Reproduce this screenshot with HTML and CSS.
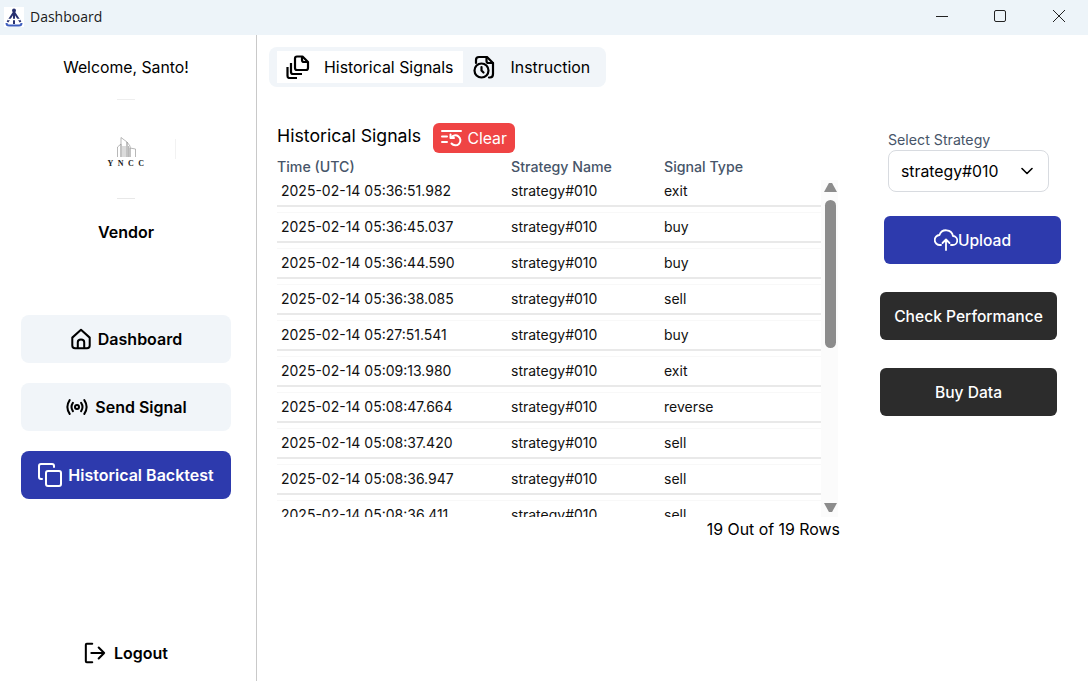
FILE: index.html
```html
<!DOCTYPE html>
<html lang="en">
<head>
	<meta charset="utf-8">
	<title>Dashboard</title>
	<link rel="stylesheet" href="styles.css">
</head>
<body>
	<header class="titlebar">
		<svg class="app-icon" width="20" height="20" viewBox="0 0 20 20">
			<rect width="20" height="20" fill="#fff"/>
			<circle cx="10" cy="3.5" r="2" fill="#27306f"/>
			<path d="M10 5 L3.5 15 M10 5 L16.5 15 M10 5 V17" stroke="#27306f" stroke-width="2" fill="none"/>
			<path d="M4 12.5 H16" stroke="#fff" stroke-width="1.5"/>
			<path d="M2.5 16 Q2.5 18.500 5 18.500 H15 Q17.500 18.500 17.500 16" stroke="#3f5fc0" stroke-width="2" fill="none"/>
		</svg>
		<span class="app-title">Dashboard</span>
		<div class="win-controls">
			<svg width="12" height="12" viewBox="0 0 12 12"><path d="M0 6.500 H12" stroke="#222" stroke-width="1"/></svg>
			<svg width="12" height="12" viewBox="0 0 12 12"><rect x=".5" y=".5" width="11" height="11" rx="1.500" fill="none" stroke="#222"/></svg>
			<svg width="14" height="14" viewBox="0 0 14 14"><path d="M1 1 L13 13 M13 1 L1 13" stroke="#222" stroke-width="1"/></svg>
		</div>
	</header>

	<div class="app">
		<aside class="sidebar">
			<p class="welcome">Welcome, Santo!</p>
			<div class="logo">
				<svg width="19" height="20" viewBox="0 0 19 20" fill="none" stroke="#999" stroke-width=".7">
					<path d="M.5 20 V10 L4 7 V20 M4 20 V.5 L10 5 V20 M6 20 V9 M8 20 V9 M10 20 V5 L13 9 V20 M13 20 V11 L18.500 12 V20 M11.500 20 V9"/>
				</svg>
				<span class="logo-text">YNCC</span>
			</div>
			<p class="role">Vendor</p>

			<nav class="side-nav">
				<a class="nav-btn">
					<svg width="22" height="22" viewBox="0 0 24 24" fill="none" stroke="currentColor" stroke-width="2.200" stroke-linejoin="round"><path d="M2.500 10.500 L12 2 L21.500 10.500 V19 Q21.500 22 18.500 22 H5.500 Q2.500 22 2.500 19 Z"/><path d="M8.500 22 V15.500 Q8.500 12.500 12 12.500 Q15.500 12.500 15.500 15.500 V22"/></svg>
					Dashboard
				</a>
				<a class="nav-btn">
					<svg width="24" height="22" viewBox="0 0 24 24" fill="none" stroke="currentColor" stroke-width="2.200" stroke-linecap="round"><circle cx="12" cy="12" r="2.200"/><path d="M7.500 7.500 Q4.500 12 7.500 16.500 M16.500 7.500 Q19.500 12 16.500 16.500 M4 4.500 Q-1 12 4 19.500 M20 4.500 Q25 12 20 19.500"/></svg>
					Send Signal
				</a>
				<a class="nav-btn active">
					<svg width="24" height="24" viewBox="0 0 24 24" fill="none" stroke="currentColor" stroke-width="2" stroke-linecap="round" stroke-linejoin="round"><rect x="8" y="8" width="15" height="15" rx="2"/><path d="M4 16 H3 Q1 16 1 14 V3 Q1 1 3 1 H14 Q16 1 16 3 V4"/></svg>
					Historical Backtest
				</a>
			</nav>

			<a class="logout">
				<svg width="22" height="22" viewBox="0 0 24 24" fill="none" stroke="currentColor" stroke-width="2.200" stroke-linecap="round" stroke-linejoin="round"><path d="M9 2 H3 Q2 2 2 3 V21 Q2 22 3 22 H9"/><path d="M8 12 H22 M16 6 L22 12 L16 18"/></svg>
				Logout
			</a>
		</aside>

		<main class="content">
			<div class="tabs">
				<a class="tab active">
					<svg width="24" height="24" viewBox="0 0 24 24" fill="none" stroke="currentColor" stroke-width="2.200" stroke-linejoin="round"><path d="M11 1.500 H16.500 L22 7 V13 Q22 15 20 15 H11 Q9 15 9 13 V3.500 Q9 1.500 11 1.500 Z"/><path d="M16 1.500 V5 Q16 7 18 7 H22"/><path d="M5 8 V17 Q5 19 7 19 H16"/><path d="M1.500 12 V21 Q1.500 23 3.500 23 H11"/></svg>
					Historical Signals
				</a>
				<a class="tab">
					<svg width="24" height="24" viewBox="0 0 24 24" fill="none" stroke="currentColor" stroke-width="2.200" stroke-linecap="round" stroke-linejoin="round"><path d="M4 8 V5 Q4 2 7 2 H15 L21 8 V19 Q21 22.500 18 22.500 H17"/><path d="M14.500 2 V6 Q14.500 8 16.500 8 H21"/><circle cx="9.500" cy="15.500" r="7"/><path d="M9.500 12 V15.500 L11.500 17.500"/></svg>
					Instruction
				</a>
			</div>

			<div class="panels">
				<section class="signals">
					<div class="signals-head">
						<h2>Historical Signals</h2>
						<button class="clear-btn">
							<svg width="21" height="18" viewBox="0 0 21 18" fill="none" stroke="currentColor" stroke-width="2" stroke-linecap="round" stroke-linejoin="round"><path d="M1 2 H20 M1 7.500 H6 M1 13 H6"/><path d="M9.500 5.500 V9 H13"/><path d="M10 9 A5 5 0 1 1 10.500 14.500"/></svg>
							Clear
						</button>
					</div>

					<div class="cols col-head">
						<span>Time (UTC)</span>
						<span>Strategy Name</span>
						<span>Signal Type</span>
					</div>

					<div class="table-wrap">
						<div class="rows">
							<div class="cols row"><span>2025-02-14 05:36:51.982</span><span>strategy#010</span><span>exit</span></div>
							<div class="cols row"><span>2025-02-14 05:36:45.037</span><span>strategy#010</span><span>buy</span></div>
							<div class="cols row"><span>2025-02-14 05:36:44.590</span><span>strategy#010</span><span>buy</span></div>
							<div class="cols row"><span>2025-02-14 05:36:38.085</span><span>strategy#010</span><span>sell</span></div>
							<div class="cols row"><span>2025-02-14 05:27:51.541</span><span>strategy#010</span><span>buy</span></div>
							<div class="cols row"><span>2025-02-14 05:09:13.980</span><span>strategy#010</span><span>exit</span></div>
							<div class="cols row"><span>2025-02-14 05:08:47.664</span><span>strategy#010</span><span>reverse</span></div>
							<div class="cols row"><span>2025-02-14 05:08:37.420</span><span>strategy#010</span><span>sell</span></div>
							<div class="cols row"><span>2025-02-14 05:08:36.947</span><span>strategy#010</span><span>sell</span></div>
							<div class="cols row"><span>2025-02-14 05:08:36.411</span><span>strategy#010</span><span>sell</span></div>
						</div>
						<div class="scrollbar">
							<span class="arrow up"></span>
							<span class="thumb"></span>
							<span class="arrow down"></span>
						</div>
					</div>
					<p class="row-count">19 Out of 19 Rows</p>
				</section>

				<aside class="actions">
					<label class="select-label">Select Strategy</label>
					<div class="select">
						strategy#010
						<svg width="12" height="8" viewBox="0 0 12 8" fill="none" stroke="#000" stroke-width="1.600" stroke-linecap="round" stroke-linejoin="round"><path d="M1 1.500 L6 6.500 L11 1.500"/></svg>
					</div>
					<button class="act-btn upload">
						<svg width="24" height="22" viewBox="0 0 24 22" fill="none" stroke="currentColor" stroke-width="1.800" stroke-linecap="round" stroke-linejoin="round"><path d="M7 16 H6 A5 5 0 0 1 5.500 6 A7 7 0 0 1 19 7 A4.500 4.500 0 0 1 18.500 16 H17"/><path d="M12 21 V11 M8.500 14 L12 10.500 L15.500 14"/></svg>
						Upload
					</button>
					<button class="act-btn dark">Check Performance</button>
					<button class="act-btn dark">Buy Data</button>
				</aside>
			</div>
		</main>
	</div>
</body>
</html>
```

FILE: styles.css
```css
* {
	box-sizing: border-box;
}
html, body {
	height: 100%;
}
body {
	margin: 0;
	display: flex;
	flex-direction: column;
	overflow: hidden;
	font-family: Inter, "Noto Sans", sans-serif;
	font-size: 14px;
	color: #000;
	background: #fff;
}
p, h2 {
	margin: 0;
}
button {
	font-family: inherit;
	border: 0;
}

/* window title bar */
.titlebar {
	height: 35px;
	flex: none;
	display: flex;
	align-items: center;
	padding-left: 4px;
	background: #edf4f9;
}
.app-icon {
	margin-bottom: 2px;
}
.app-title {
	margin-left: 6px;
	margin-bottom: 2px;
	font-family: "Open Sans", sans-serif;
	font-size: 14px;
	color: #1a1a1a;
}
.win-controls {
	margin-left: auto;
	display: flex;
	align-items: center;
	gap: 46px;
	padding: 0 22px 3px 0;
}

.app {
	flex: 1;
	display: flex;
	min-height: 0;
}

/* sidebar */
.sidebar {
	width: 257px;
	flex: none;
	display: flex;
	flex-direction: column;
	align-items: center;
	padding: 23px 4px 17px 0;
	border-right: 1px solid #c9c9c9;
}
.welcome {
	font-size: 15.8px;
	line-height: 20px;
}
.logo {
	width: 100px;
	height: 100px;
	margin-top: 21px;
	padding-top: 8px;
	display: flex;
	flex-direction: column;
	align-items: center;
	justify-content: center;
	background:
		linear-gradient(#eee, #eee) center top / 18px 1px no-repeat,
		linear-gradient(#e8e8e8, #e8e8e8) center bottom / 18px 1px no-repeat,
		linear-gradient(#f2f2f2, #f2f2f2) right center / 1px 20px no-repeat;
}
.logo-text {
	margin-top: 2px;
	margin-right: -4px;
	font-family: "Liberation Serif", serif;
	font-size: 8px;
	line-height: 10px;
	font-weight: 700;
	letter-spacing: 4.500px;
	color: #222;
}
.role {
	margin-top: 23px;
	font-size: 16px;
	font-weight: 600;
	line-height: 20px;
}
.side-nav {
	margin-top: 73px;
	display: flex;
	flex-direction: column;
	gap: 20px;
}
.nav-btn {
	width: 210px;
	height: 48px;
	display: flex;
	align-items: center;
	justify-content: center;
	gap: 6px;
	border-radius: 8px;
	font-size: 16px;
	font-weight: 600;
	background: #f1f5f9;
}
.nav-btn.active {
	color: #fff;
	background: #2d3aad;
}
.logout {
	margin-top: auto;
	display: flex;
	align-items: center;
	gap: 8px;
	font-size: 16px;
	font-weight: 600;
}

/* tabs */
.content {
	flex: 1;
	min-width: 0;
	padding: 12px 0 0 12px;
}
.tabs {
	width: 337px;
	height: 40px;
	display: flex;
	align-items: center;
	padding: 4px 8px;
	border-radius: 8px;
	background: #f1f5f9;
}
.tab {
	height: 32px;
	display: flex;
	align-items: center;
	gap: 14px;
	padding: 0 9px;
	font-size: 15.900px;
	white-space: nowrap;
}
.tab + .tab {
	gap: 15px;
}
.tab.active {
	background: #fff;
}

.panels {
	display: flex;
}

/* signals table */
.signals {
	width: 563px;
	margin: 36px 0 0 8px;
}
.signals-head {
	height: 30px;
	display: flex;
	align-items: center;
	gap: 12px;
}
.signals-head h2 {
	margin-top: -5px;
	font-size: 17.700px;
	font-weight: 400;
}
.clear-btn {
	width: 82px;
	height: 30px;
	display: flex;
	align-items: center;
	justify-content: center;
	gap: 5px;
	border-radius: 6px;
	font-size: 15.800px;
	color: #fff;
	background: #ef4444;
}
.cols {
	display: grid;
	grid-template-columns: 234px 153px 1fr;
}
.col-head {
	height: 27px;
	align-items: center;
	font-size: 14.200px;
	font-weight: 500;
	color: #475569;
}
.table-wrap {
	height: 337px;
	display: flex;
	overflow: hidden;
}
.rows {
	width: 544px;
	flex: none;
}
.row {
	height: 36px;
	align-items: center;
	padding-bottom: 15px;
	color: #111;
	background:
		linear-gradient(#e9e9e9, #e9e9e9) 0 25px / 100% 2px no-repeat,
		linear-gradient(#f8f8f8, #f8f8f8) 0 32px / 100% 1px no-repeat;
}
.row span:first-child {
	padding-left: 4px;
}
.scrollbar {
	width: 17px;
	flex: none;
	position: relative;
	background: #fbfbfb;
}
.thumb {
	position: absolute;
	top: 20px;
	left: 4px;
	width: 11px;
	height: 148px;
	border-radius: 6px;
	background: #8c8c8c;
}
.arrow {
	position: absolute;
	left: 3px;
	width: 13px;
	height: 9px;
	background: #8c8c8c;
}
.arrow.up {
	top: 3px;
	clip-path: polygon(38% 0, 62% 0, 100% 100%, 0 100%);
}
.arrow.down {
	bottom: 5px;
	clip-path: polygon(0 0, 100% 0, 62% 100%, 38% 100%);
}
.row-count {
	margin-top: 3px;
	text-align: right;
	font-size: 15.900px;
	line-height: 20px;
}

/* right column */
.actions {
	margin: 43px 0 0 48px;
	width: 190px;
	display: flex;
	flex-direction: column;
	align-items: flex-start;
}
.select-label {
	font-size: 14.200px;
	line-height: 20px;
	color: #475569;
}
.select {
	width: 161px;
	height: 42px;
	margin-bottom: 24px;
	display: flex;
	align-items: center;
	justify-content: space-between;
	padding: 0 15px 0 12px;
	border: 1px solid #d8dbe0;
	border-radius: 8px;
	font-size: 15.800px;
}
.act-btn {
	width: 177px;
	height: 48px;
	margin: 0 0 28px -8px;
	display: flex;
	align-items: center;
	justify-content: center;
	border-radius: 6px;
	font-size: 15.600px;
	font-weight: 500;
	color: #fff;
}
.upload {
	margin-left: -4px;
	background: #2d3aad;
}
.dark {
	background: #2c2c2c;
}
```
